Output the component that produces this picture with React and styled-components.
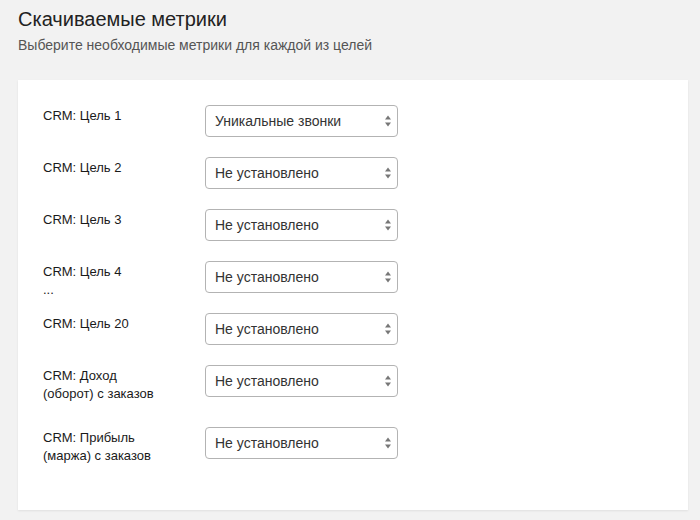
import React from 'react';
import styled, { createGlobalStyle } from 'styled-components';

const GlobalStyle = createGlobalStyle`
  html, body {
    margin: 0;
    padding: 0;
    background: #f2f2f2;
    font-family: "Liberation Sans", Arial, sans-serif;
  }
`;

const Page = styled.div`
  padding: 7px 12px 10px 18px;
`;

const Title = styled.h1`
  margin: 0;
  font-size: 20px;
  line-height: 24px;
  font-weight: normal;
  color: #222;
`;

const Subtitle = styled.p`
  margin: 4px 0 0;
  font-size: 14px;
  line-height: 20px;
  color: #555;
`;

const Card = styled.div`
  margin-top: 25px;
  width: 670px;
  box-sizing: border-box;
  background: #fff;
  padding: 25px 25px 21px;
  box-shadow: 0 1px 2px rgba(0, 0, 0, 0.08);
`;

const Row = styled.div`
  display: flex;
  align-items: flex-start;
  height: ${(p) => (p.$tall ? 42 : 32)}px;
  margin-bottom: 20px;
`;

const Label = styled.div`
  width: 162px;
  flex-shrink: 0;
  padding-top: 2px;
  font-size: 13px;
  line-height: 18px;
  color: #1a1a1a;
`;

const SelectWrap = styled.div`
  position: relative;
  width: 193px;
`;

const Select = styled.select`
  appearance: none;
  -webkit-appearance: none;
  width: 100%;
  height: 32px;
  box-sizing: border-box;
  border: 1px solid #b3b3b3;
  border-radius: 4px;
  background: #fff;
  padding: 0 24px 0 9px;
  font-family: "Liberation Sans", Arial, sans-serif;
  font-size: 14px;
  color: #333;
  outline: none;
`;

const Arrows = styled.svg`
  position: absolute;
  right: 6px;
  top: 9px;
  pointer-events: none;
`;

const rows = [
  { label: ['CRM: Цель 1'], value: 'Уникальные звонки' },
  { label: ['CRM: Цель 2'] },
  { label: ['CRM: Цель 3'] },
  { label: ['CRM: Цель 4', '...'] },
  { label: ['CRM: Цель 20'] },
  { label: ['CRM: Доход', '(оборот) с заказов'], tall: true },
  { label: ['CRM: Прибыль', '(маржа) с заказов'], tall: true },
];

const options = ['Не установлено', 'Уникальные звонки', 'Все звонки'];

const MetricRow = ({ label, value, tall }) => (
  <Row $tall={tall}>
    <Label>
      {label.map((line, i) => (
        <React.Fragment key={line}>
          {i > 0 && <br />}
          {line}
        </React.Fragment>
      ))}
    </Label>
    <SelectWrap>
      <Select defaultValue={value || 'Не установлено'}>
        {options.map((o) => (
          <option key={o} value={o}>{o}</option>
        ))}
      </Select>
      <Arrows width="8" height="14" viewBox="0 0 8 14">
        <path d="M4 1.5 L7 5.5 L1 5.5 Z" fill="#777" />
        <path d="M4 12.5 L7 8.5 L1 8.5 Z" fill="#777" />
      </Arrows>
    </SelectWrap>
  </Row>
);

const App = () => (
  <Page>
    <GlobalStyle />
    <Title>Скачиваемые метрики</Title>
    <Subtitle>Выберите необходимые метрики для каждой из целей</Subtitle>
    <Card>
      {rows.map((r) => (
        <MetricRow key={r.label[0]} {...r} />
      ))}
    </Card>
  </Page>
);

export default App;
